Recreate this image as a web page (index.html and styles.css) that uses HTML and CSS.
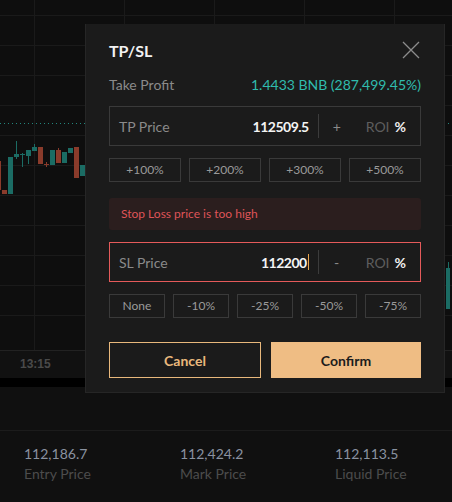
FILE: index.html
```html
<!DOCTYPE html>
<html lang="en">

<head>
    <meta charset="UTF-8">
    <meta name="viewport" content="width=device-width, initial-scale=1.0">
    <title>TP/SL</title>
    <link rel="stylesheet" href="styles.css">
</head>

<body>
    <div class="chart">
        <svg class="chart-canvas" width="452" height="350" viewBox="0 0 452 350">
            <g stroke="#1a1a1a" stroke-width="1">
                <line x1="0" y1="15.5" x2="452" y2="15.5" />
                <line x1="0" y1="45.5" x2="452" y2="45.5" />
                <line x1="0" y1="75.5" x2="452" y2="75.5" />
                <line x1="0" y1="105.5" x2="452" y2="105.5" />
                <line x1="0" y1="135.5" x2="452" y2="135.5" />
                <line x1="0" y1="165.5" x2="452" y2="165.5" />
                <line x1="0" y1="195.5" x2="452" y2="195.5" />
                <line x1="0" y1="225.5" x2="452" y2="225.5" />
                <line x1="0" y1="255.5" x2="452" y2="255.5" />
                <line x1="0" y1="285.5" x2="452" y2="285.5" />
                <line x1="0" y1="315.5" x2="452" y2="315.5" />
                <line x1="34.5" y1="0" x2="34.5" y2="350" />
                <line x1="124.5" y1="0" x2="124.5" y2="350" />
                <line x1="214.5" y1="0" x2="214.5" y2="350" />
                <line x1="304.5" y1="0" x2="304.5" y2="350" />
                <line x1="394.5" y1="0" x2="394.5" y2="350" />
            </g>
            <line x1="0" y1="123.5" x2="452" y2="123.5" stroke="#23857c" stroke-width="1" stroke-dasharray="1 3" />
            <!-- candles -->
            <g fill="#8a3b2b">
                <rect x="0" y="161" width="1" height="29" />
                <rect x="2" y="190" width="5" height="4" />
                <rect x="38" y="147" width="5" height="17" />
                <rect x="44" y="164" width="5" height="1" />
                <rect x="46" y="162" width="1" height="5" />
                <rect x="56" y="150" width="5" height="13" />
                <rect x="58" y="148" width="1" height="2" />
                <rect x="74" y="147" width="5" height="31" />
            </g>
            <g fill="#1b6c64">
                <rect x="8" y="157" width="5" height="37" />
                <rect x="16" y="141" width="1" height="18" />
                <rect x="14" y="154" width="5" height="3" />
                <rect x="22" y="153" width="1" height="14" />
                <rect x="20" y="154" width="5" height="1" />
                <rect x="28" y="156" width="1" height="8" />
                <rect x="26" y="150" width="5" height="6" />
                <rect x="34" y="144" width="1" height="4" />
                <rect x="32" y="147" width="5" height="4" />
                <rect x="50" y="150" width="5" height="15" />
                <rect x="62" y="152" width="5" height="11" />
                <rect x="68" y="148" width="5" height="5" />
                <rect x="80" y="165" width="5" height="11" />
                <rect x="448" y="262" width="1" height="6" />
                <rect x="446" y="268" width="4" height="41" />
            </g>
        </svg>
    </div>
    <div class="time-axis">13:15</div>
    <div class="strip"></div>
    <div class="panel-head"></div>
    <div class="stats">
        <div class="stat">
            <div class="stat-value">112,186.7</div>
            <div class="stat-label">Entry Price</div>
        </div>
        <div class="stat">
            <div class="stat-value">112,424.2</div>
            <div class="stat-label">Mark Price</div>
        </div>
        <div class="stat">
            <div class="stat-value">112,113.5</div>
            <div class="stat-label">Liquid Price</div>
        </div>
    </div>

    <div class="modal">
        <div class="modal-head">
            <h2>TP/SL</h2>
            <svg class="close" width="18" height="18" viewBox="0 0 18 18">
                <path d="M1 1L17 17M17 1L1 17" stroke="#8c8c8c" stroke-width="1.3" fill="none" />
            </svg>
        </div>

        <div class="profit-row">
            <span class="muted">Take Profit</span>
            <span class="profit">1.4433 BNB (287,499.45%)</span>
        </div>

        <div class="price-box">
            <span class="box-label">TP Price</span>
            <span class="box-value">112509.5</span>
            <span class="sep"></span>
            <span class="sign">+</span>
            <span class="roi">ROI</span>
            <span class="pct">%</span>
        </div>

        <div class="chips four">
            <div class="chip">+100%</div>
            <div class="chip">+200%</div>
            <div class="chip">+300%</div>
            <div class="chip">+500%</div>
        </div>

        <div class="error">Stop Loss price is too high</div>

        <div class="price-box invalid">
            <span class="box-label">SL Price</span>
            <span class="box-value">112200<span class="caret"></span></span>
            <span class="sep"></span>
            <span class="sign">-</span>
            <span class="roi">ROI</span>
            <span class="pct">%</span>
        </div>

        <div class="chips five">
            <div class="chip">None</div>
            <div class="chip">-10%</div>
            <div class="chip">-25%</div>
            <div class="chip">-50%</div>
            <div class="chip">-75%</div>
        </div>

        <div class="actions">
            <button class="btn-cancel">Cancel</button>
            <button class="btn-confirm">Confirm</button>
        </div>
    </div>
</body>

</html>
```

FILE: styles.css
```css
body {
    font-family: Lato, "Open Sans", sans-serif;
    background-color: #0f0f0f;
    margin: 0;
    padding: 0;
    width: 452px;
    height: 502px;
    overflow: hidden;
    position: relative;
}

.chart {
    height: 350px;
    background-color: #0e0e0e;
}

.chart-canvas {
    display: block;
}

.time-axis {
    height: 27px;
    border-top: 1px solid #222;
    background-color: #111;
    padding-left: 20px;
    font-size: 12px;
    font-weight: bold;
    color: #4a4a4a;
    line-height: 26px;
    font-family: "Liberation Sans", Arial, sans-serif;
}

.strip {
    height: 9px;
    background-color: #000;
}

.panel-head {
    height: 43px;
    background-color: #101010;
    border-bottom: 1px solid #1c1c1c;
}

.stats {
    display: grid;
    grid-template-columns: 156px 155px 1fr;
    padding: 13px 0 0 24px;
    background-color: #101010;
    height: 58px;
}

.stat-value {
    font-size: 14px;
    color: #8a92a0;
    line-height: 20px;
}

.stat-label {
    font-size: 14px;
    color: #4c4c4c;
    line-height: 20px;
}

/* modal */
.modal {
    position: absolute;
    left: 85px;
    top: 24px;
    width: 312px;
    height: 354px;
    padding: 14px 23px 0;
    background-color: #1b1b1b;
    border: 1px solid #262626;
    border-top: none;
}

.modal-head {
    display: flex;
    justify-content: space-between;
    align-items: center;
    height: 24px;
}

.modal-head h2 {
    margin: 0;
    font-size: 16px;
    font-weight: bold;
    color: #f2f2f2;
}

.close {
    margin-right: 1px;
}

.profit-row {
    display: flex;
    justify-content: space-between;
    align-items: center;
    height: 20px;
    margin-top: 12px;
    font-size: 14px;
}

.muted {
    color: #8a8a8a;
}

.profit {
    color: #30bcae;
}

.price-box {
    display: flex;
    align-items: center;
    height: 38px;
    margin-top: 12px;
    padding: 0 14px 0 9px;
    border: 1px solid #3a3a3a;
}

.price-box.invalid {
    border-color: #e45a5a;
}

.box-label {
    flex: 1;
    font-size: 14px;
    color: #8a8a8a;
}

.box-value {
    font-size: 14px;
    font-weight: bold;
    color: #f4f4f4;
    letter-spacing: -0.5px;
    display: flex;
    align-items: center;
}

.caret {
    display: inline-block;
    width: 1px;
    height: 16px;
    margin-left: 1px;
    background-color: #e8a44c;
}

.sep {
    width: 1px;
    height: 24px;
    margin: 0 13px 0 9px;
    background-color: #3c3c3c;
}

.sign {
    width: 10px;
    font-size: 14px;
    color: #8a8a8a;
    text-align: center;
}

.roi {
    margin-left: 24px;
    font-size: 14px;
    color: #5e5e5e;
}

.pct {
    margin-left: 5px;
    font-size: 14px;
    font-weight: bold;
    color: #eeeeee;
}

.chips {
    display: grid;
    gap: 8px;
    margin-top: 12px;
}

.chips.four {
    grid-template-columns: repeat(4, 1fr);
}

.chips.five {
    grid-template-columns: repeat(5, 1fr);
}

.chip {
    height: 22px;
    border: 1px solid #3a3a3a;
    font-size: 12px;
    line-height: 22px;
    text-align: center;
    color: #9a9a9a;
}

.error {
    height: 32px;
    margin-top: 16px;
    padding-left: 12px;
    border-radius: 3px;
    background-color: #2b1e1e;
    color: #df5458;
    font-size: 12px;
    line-height: 32px;
}

.actions {
    display: grid;
    grid-template-columns: 152px 150px;
    gap: 10px;
    margin-top: 24px;
}

.actions button {
    height: 36px;
    font-family: Lato, "Open Sans", sans-serif;
    font-size: 14px;
    font-weight: bold;
    cursor: pointer;
}

.btn-cancel {
    background-color: transparent;
    border: 1px solid #e9b87c;
    color: #e9b87c;
}

.btn-confirm {
    background-color: #efbd84;
    border: none;
    color: #1c1c1c;
}
```
